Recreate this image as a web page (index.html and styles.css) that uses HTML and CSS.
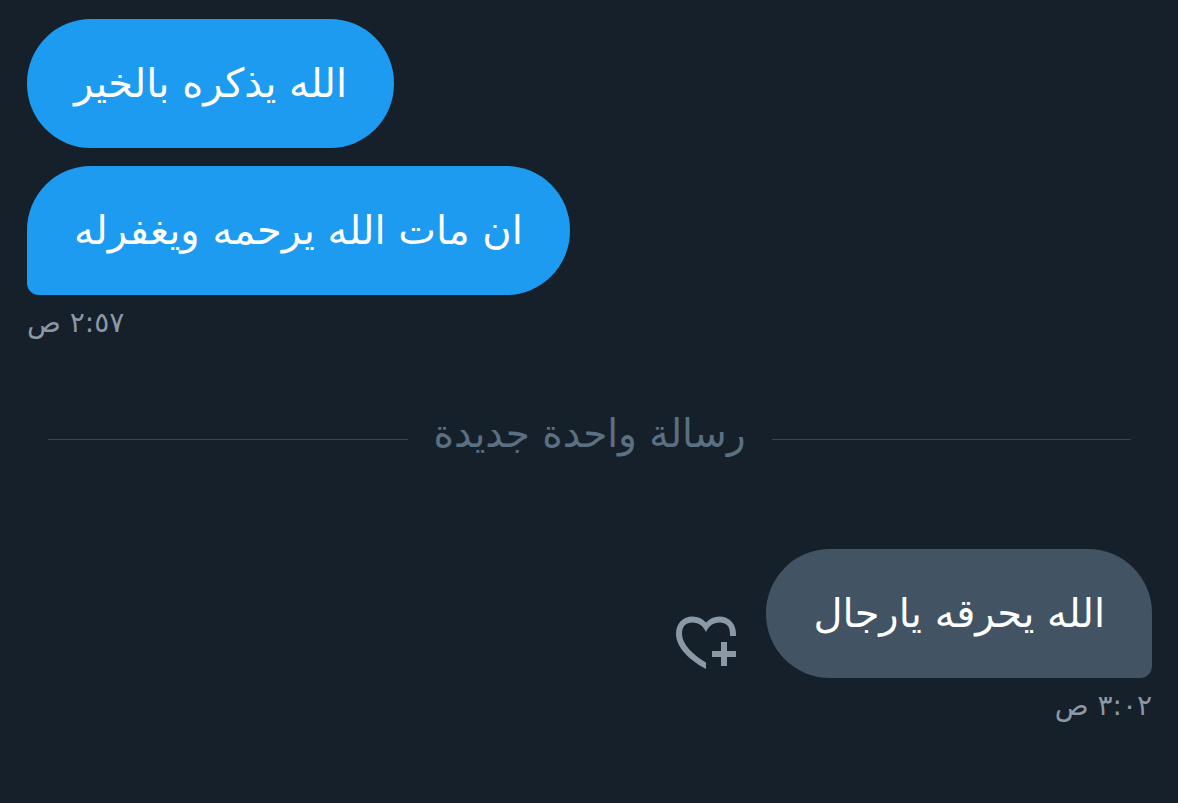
FILE: index.html
```html
<!DOCTYPE html>
<html lang="ar" dir="rtl">
<head>
    <meta charset="UTF-8">
    <meta name="viewport" content="width=device-width, initial-scale=1.0">
    <title>الرسائل</title>
    <link rel="stylesheet" href="styles.css">
</head>
<body>
    <main class="chat">
        <section class="group sent">
            <p class="bubble">الله يذكره بالخير</p>
            <p class="bubble last">ان مات الله يرحمه ويغفرله</p>
            <time class="time">٢:٥٧ ص</time>
        </section>

        <div class="divider">
            <span>رسالة واحدة جديدة</span>
        </div>

        <section class="group received">
            <div class="row">
                <p class="bubble last">الله يحرقه يارجال</p>
                <button class="react" type="button" aria-label="إضافة تفاعل">
                    <svg viewBox="0 0 60 54" width="60" height="54">
                        <path d="M30 53C13 44 0 31 0 18C0 7 7 0.500 16.500 0.500C22 0.500 26.500 2.500 30 6.500C33.500 2.500 38 0.500 43.500 0.500C53 0.500 60 7 60 18V20H54V18C54 10 50 6.500 43.500 6.500C37 6.500 33 10 30 16C27 10 23 6.500 16.500 6.500C10 6.500 6 10 6 18C6 28 17 39 30 46.500Z" fill="currentColor"/>
                        <path d="M48 26V50M36 38H60" fill="none" stroke="currentColor" stroke-width="6"/>
                    </svg>
                </button>
            </div>
            <time class="time">٣:٠٢ ص</time>
        </section>
    </main>
</body>
</html>
```

FILE: styles.css
```css
body {
    margin: 0;
    background-color: #16202a;
    color: #fff;
    font-family: "DejaVu Sans", sans-serif;
}

.chat {
    padding: 19px 26px 19px 27px;
}

.group {
    display: flex;
    flex-direction: column;
}

.sent {
    align-items: flex-end;
}

.received {
    align-items: flex-start;
}

.bubble {
    margin: 0 0 18px;
    padding: 32px 47px;
    border-radius: 64px;
    font-size: 40px;
    line-height: 65px;
}

.sent .bubble {
    background-color: #1d9bf0;
}

.received .bubble {
    background-color: #425364;
}

.bubble.last {
    margin-bottom: 12px;
}

.sent .last {
    border-bottom-left-radius: 12px;
}

.received .last {
    border-bottom-right-radius: 12px;
}

.time {
    color: #8b98a5;
    font-size: 28px;
    line-height: 32px;
}

.divider {
    display: flex;
    align-items: center;
    gap: 26px;
    margin: 70px 21px 80px;
    color: #5b7083;
    font-size: 39px;
    line-height: 50px;
}

.divider span {
    padding-bottom: 10px;
}

.divider::before,
.divider::after {
    content: "";
    flex: 1;
    height: 1px;
    background-color: #38444d;
}

.row {
    display: flex;
    align-items: flex-end;
    gap: 30px;
}

.react {
    display: flex;
    margin-bottom: 20px;
    padding: 0;
    border: none;
    background: none;
    color: #8b98a5;
    cursor: pointer;
}
```
